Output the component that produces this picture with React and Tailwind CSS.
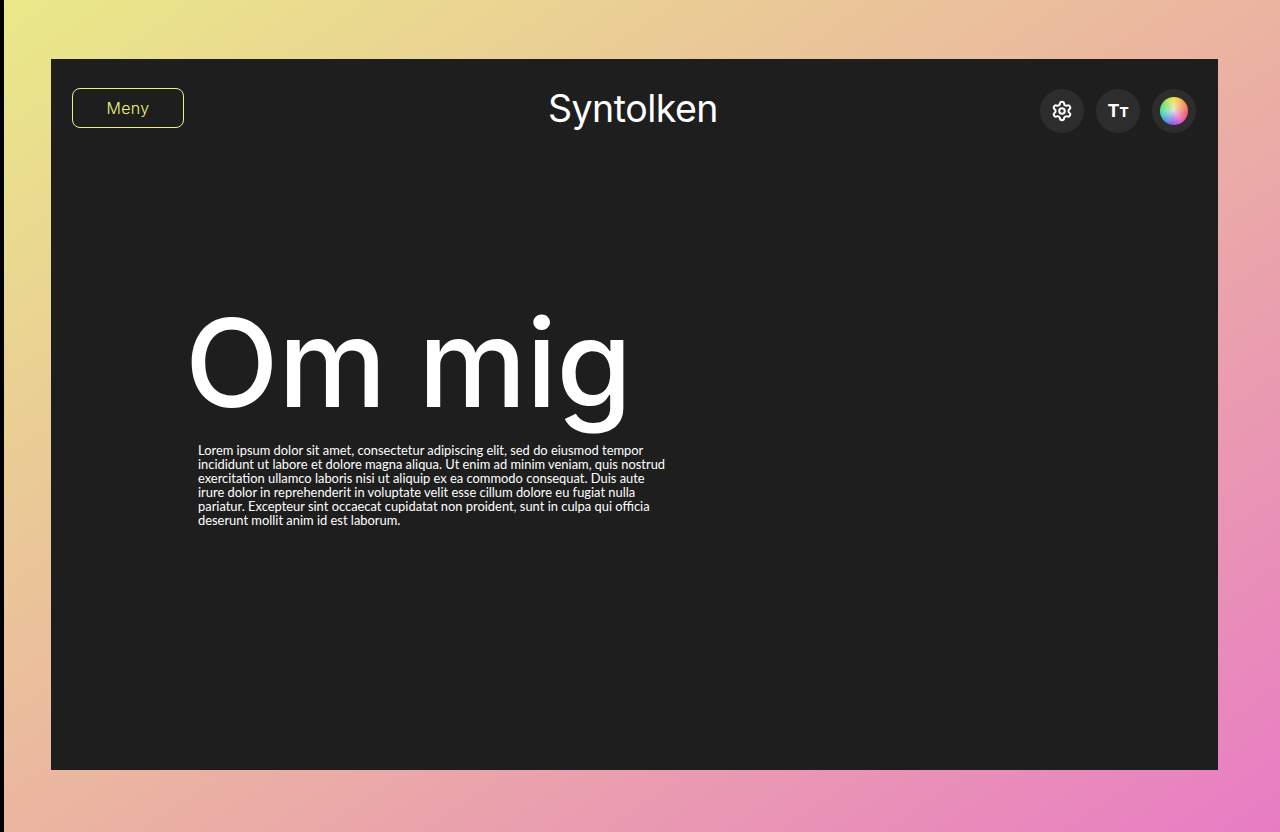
import React from 'react';
import { Settings } from 'lucide-react';

const LOREM = 'Lorem ipsum dolor sit amet, consectetur adipiscing elit, sed do eiusmod tempor incididunt ut labore et dolore magna aliqua. Ut enim ad minim veniam, quis nostrud exercitation ullamco laboris nisi ut aliquip ex ea commodo consequat. Duis aute irure dolor in reprehenderit in voluptate velit esse cillum dolore eu fugiat nulla pariatur. Excepteur sint occaecat cupidatat non proident, sunt in culpa qui officia deserunt mollit anim id est laborum.';

const RoundButton = ({ children, label }) => (
  <button aria-label={label} className="w-11 h-11 rounded-full bg-[#2d2d2d] flex items-center justify-center">
    {children}
  </button>
);

const App = () => {
  return (
    <div className="h-[832px] overflow-hidden bg-black pl-1">
      <div className="h-full pl-[47px] pr-[62px] pt-[59px] pb-[62px] bg-[linear-gradient(146deg,#e9e988_0%,#ebb5a0_50%,#e87cc4_100%)]">
        <main className="h-full bg-[#1e1e1e] flex flex-col">
          <header className="grid grid-cols-[1fr_auto_1fr] items-start pl-[21px] pr-[22px] pt-[29px]">
            <button className="justify-self-start w-28 h-10 rounded-lg border border-[#eeee88] text-[#f2f280] text-[16px] tracking-[0.3px] font-['Inter',sans-serif] font-light">
              Meny
            </button>
            <h1 className="-mt-[2px] -ml-[2px] text-[37.5px] leading-[46px] tracking-[-0.5px] text-white font-['Inter',sans-serif] font-normal">Syntolken</h1>
            <div className="justify-self-end flex gap-3 pt-px">
              <RoundButton label="Inställningar">
                <Settings size={22} color="#fff" strokeWidth={2.2} />
              </RoundButton>
              <RoundButton label="Textstorlek">
                <span className="flex items-baseline text-white font-['Inter',sans-serif] font-bold text-[18px] leading-none">T<span className="text-[13.5px] font-extrabold">T</span></span>
              </RoundButton>
              <RoundButton label="Färg">
                <span className="w-7 h-7 rounded-full bg-[radial-gradient(circle,rgba(240,232,232,0.85)_0%,rgba(240,232,232,0)_72%),conic-gradient(from_0deg,#f4e040,#f4a040_12%,#f05060_28%,#e050c0_40%,#8050e8_52%,#40a0e0_64%,#40e0a0_74%,#70e060_84%,#c0e850_94%,#f4e040)]" />
              </RoundButton>
            </div>
          </header>
          <section className="pl-[147px] pt-[155px] w-[640px]">
            <h2 className="-ml-[13px] text-[122px] leading-[150px] tracking-[-0.4px] text-white font-['Inter',sans-serif] font-medium">Om mig</h2>
            <p className="mt-[5px] w-[472px] text-[12.9px] leading-[14px] text-white font-['Lato',sans-serif]">{LOREM}</p>
          </section>
        </main>
      </div>
    </div>
  );
};

export default App;
